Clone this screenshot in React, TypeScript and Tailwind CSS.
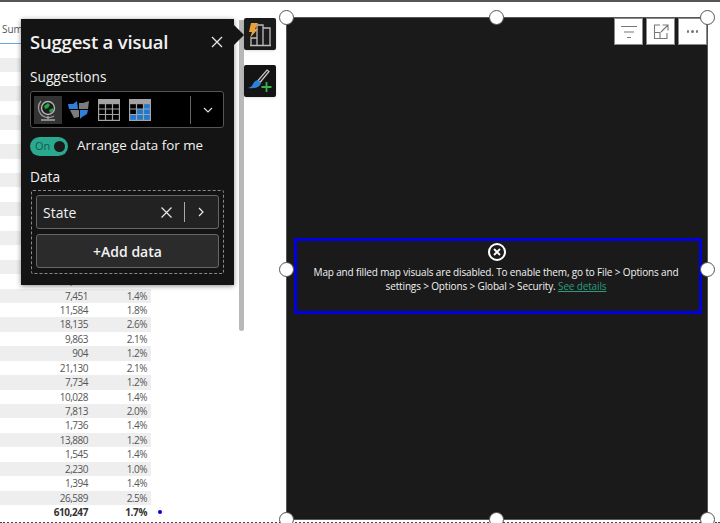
import React from 'react';

const rows = [
  ['', ''], ['', ''], ['', ''], ['', ''], ['', ''], ['', ''], ['', ''], ['', ''],
  ['', ''], ['', ''], ['', ''], ['', ''], ['', ''], ['', ''], ['', ''],
  ['8,308', '1.6%'],
  ['7,451', '1.4%'], ['11,584', '1.8%'], ['18,135', '2.6%'], ['9,863', '2.1%'],
  ['904', '1.2%'], ['21,130', '2.1%'], ['7,734', '1.2%'], ['10,028', '1.4%'],
  ['7,813', '2.0%'], ['1,736', '1.4%'], ['13,880', '1.2%'], ['1,545', '1.4%'],
  ['2,230', '1.0%'], ['1,394', '1.4%'], ['26,589', '2.5%'],
];

const Handle = ({ className }: { className: string }) => (
  <div className={`absolute w-[15px] h-[15px] rounded-full bg-white border-[1.5px] border-[#555] ${className}`} />
);

const GlobeIcon = () => (
  <svg width="22" height="24" viewBox="0 0 22 24" fill="none">
    <path d="M4 3a10 10 0 0 0 13 15" stroke="#9a9a9a" strokeWidth="1.3" />
    <circle cx="11" cy="10" r="6.5" fill="#1b1b1b" stroke="#b5b5b5" strokeWidth="1.4" />
    <path d="M7 8l4-3 2 2-2 3-3 1zM12 12l4-2 0 3-3 2z" fill="#21a34a" />
    <path d="M11 18v3M4 22h14" stroke="#a8a8a8" strokeWidth="1.3" />
  </svg>
);

const MapIcon = () => (
  <svg width="23" height="21" viewBox="0 0 23 21">
    <path d="M1 5l5 0 4-3 1 8H2z" fill="#2f80d8" />
    <path d="M12 4l4 0 6-2-1 8h-9z" fill="#7c7c7c" />
    <path d="M3 11h9v7l-5 1-2-4z" fill="#7c7c7c" />
    <path d="M13 11h8l-1 4-5 3-2 2z" fill="#2f80d8" />
  </svg>
);

const TableIcon = () => (
  <svg width="22" height="22" viewBox="0 0 22 22" fill="none" stroke="#a3a3a3" strokeWidth="1.2">
    <rect x="0.6" y="0.6" width="20.8" height="20.8" />
    <rect x="0.6" y="0.6" width="20.8" height="4" fill="#a3a3a3" />
    <path d="M0.6 10h20.8M0.6 15.5h20.8M7.5 5v16M14.5 5v16" />
  </svg>
);

const TableBlueIcon = () => (
  <svg width="22" height="22" viewBox="0 0 22 22" fill="none">
    <rect x="7.5" y="10" width="14" height="11.5" fill="#1f78d1" />
    <rect x="14.5" y="5" width="7" height="5" fill="#1f78d1" />
    <rect x="0.6" y="15.5" width="7" height="6" fill="#1f78d1" />
    <g stroke="#a3a3a3" strokeWidth="1.2">
      <rect x="0.6" y="0.6" width="20.8" height="20.8" />
      <rect x="0.6" y="0.6" width="20.8" height="4" fill="#a3a3a3" />
      <path d="M0.6 10h20.8M0.6 15.5h20.8M7.5 5v16M14.5 5v16" />
    </g>
  </svg>
);

const SuggestIcon = () => (
  <svg width="24" height="26" viewBox="0 0 24 26" fill="none">
    <path d="M3 24v-7h6v7M9 24V4h6v20M15 24V7h7v17M2 24.500h21" stroke="#bdbdbd" strokeWidth="1.3" />
    <path d="M3 2h7L7 8h3L2 17l2-6H1z" fill="#e8a33c" />
  </svg>
);

const BrushIcon = () => (
  <svg width="26" height="26" viewBox="0 0 26 26" fill="none">
    <path d="M20 2l2 1.5-9 11-2-2z" fill="#1b1b1b" stroke="#c8c8c8" strokeWidth="1.2" />
    <path d="M11 12l3 3c-1 4-5 6-13 5 3-1 4-2 5-4 1-2 3-4 5-4z" fill="#2f80d8" />
    <path d="M19.5 14v10M14.500 19h10" stroke="#37b24d" strokeWidth="1.8" />
  </svg>
);

const FilterIcon = () => (
  <svg width="16" height="14" viewBox="0 0 16 14" stroke="#777" strokeWidth="1.2">
    <path d="M0 1.500h16M3 7h10M6 12.500h4" />
  </svg>
);

const FocusIcon = () => (
  <svg width="16" height="16" viewBox="0 0 16 16" fill="none" stroke="#777" strokeWidth="1.1">
    <path d="M7 1H1.500v13.500H14V9M9.500 1H15v5.500M15 1L8 8M1.500 8.500H7V14.500" />
  </svg>
);

export default function App() {
  return (
    <div className="relative w-[720px] h-[523px] overflow-hidden bg-white font-['Open_Sans',sans-serif]">
      <div className="h-[1.5px] bg-[#555]" />

      <div className="flex h-[520px]">
        {/* table */}
        <div className="w-[151px] shrink-0">
          <div className="h-[42px] flex items-end pb-[6px] border-b border-[#6aa9e0] text-[10px] text-[#555]">
            <span className="pl-[2px]">Sum</span>
          </div>
          <div className="h-[14px]" />
          <div className="text-[10px] leading-[14.45px] text-[#555] tracking-[-0.5px]">
            {rows.map((row, i) => (
              <div key={i} className={`flex h-[14.45px] ${i % 2 === 0 ? 'bg-[#eeeeee]' : 'bg-white'}`}>
                <span className="w-[88px] text-right">{row[0]}</span>
                <span className="w-[59px] text-right">{row[1]}</span>
              </div>
            ))}
          </div>
          <div className="flex h-[14px] text-[10px] leading-[14px] font-bold text-[#333] tracking-[-0.4px]">
            <span className="w-[88px] shrink-0 text-right">610,247</span>
            <span className="w-[59px] shrink-0 text-right">1.7%</span>
            <span className="w-[4px] h-[4px] rounded-full bg-[#0000e0] ml-[11px] mt-[5px] shrink-0" />
          </div>
        </div>

        {/* scrollbar */}
        <div className="w-[5px] h-[311px] mt-[18px] ml-[88px] rounded-b-sm bg-[#b8b8b8] shrink-0" />

        {/* toolbar */}
        <div className="flex flex-col gap-[15px] pt-[16.5px] shrink-0">
          <div className="w-[32px] h-[32px] rounded-[2px] bg-[#1b1b1b] flex items-center justify-center shadow-sm">
            <SuggestIcon />
          </div>
          <div className="w-[32px] h-[32px] rounded-[2px] bg-[#141414] flex items-center justify-center shadow-sm">
            <BrushIcon />
          </div>
        </div>

        {/* map visual */}
        <div className="relative w-[422px] h-[503px] ml-[10px] mt-[15.5px] bg-[#1a1a1a] border border-[#555] flex flex-col items-stretch justify-center shrink-0">
          <div className="absolute top-0 right-0 flex gap-[3px]">
            <div className="w-[29px] h-[27px] bg-white border border-[#8a8a8a] flex items-center justify-center"><FilterIcon /></div>
            <div className="w-[29px] h-[27px] bg-white border border-[#8a8a8a] flex items-center justify-center"><FocusIcon /></div>
            <div className="w-[29px] h-[27px] bg-white border border-[#8a8a8a] flex items-center justify-center gap-[2px]">
              <span className="w-[2.5px] h-[2.5px] rounded-full bg-[#777]" />
              <span className="w-[2.5px] h-[2.5px] rounded-full bg-[#777]" />
              <span className="w-[2.5px] h-[2.5px] rounded-full bg-[#777]" />
            </div>
          </div>

          <div className="ml-[7px] mr-[5px] mt-[15px] h-[76px] border-[3px] border-[#0000e0] flex flex-col items-center pt-[1.500px] text-[10px] leading-[14px] text-[#f2f2f2] text-center">
            <div className="w-[18px] h-[18px] rounded-full border-[2px] border-white flex items-center justify-center shrink-0 mb-[4px] -ml-[2px]">
              <svg width="8" height="8" viewBox="0 0 8 8" stroke="#fff" strokeWidth="1.8"><path d="M1 1l6 6M7 1L1 7" /></svg>
            </div>
            <p className="w-[385px] tracking-[-0.15px] -ml-[4px]">
              Map and filled map visuals are disabled. To enable them, go to File &gt; Options and settings &gt; Options &gt; Global &gt; Security. <a className="text-[#2a9d7f] underline">See details</a>
            </p>
          </div>

          <Handle className="-left-[8px] -top-[8px]" />
          <Handle className="left-[202px] -top-[8px]" />
          <Handle className="-right-[8px] -top-[8px]" />
          <Handle className="-left-[8px] top-[244px]" />
          <Handle className="-right-[8px] top-[244px]" />
          <Handle className="-left-[8px] -bottom-[8px]" />
          <Handle className="left-[202px] -bottom-[8px]" />
          <Handle className="-right-[8px] -bottom-[8px]" />
        </div>
      </div>

      {/* dotted bottom edge */}
      <div className="border-t-2 border-dotted border-[#444]" />

      {/* suggest popup */}
      <div className="absolute left-[21px] top-[19px] w-[213px] h-[266px] bg-[#141414] shadow-[0_1px_5px_rgba(0,0,0,0.45)] px-[9px] pt-[9px] text-[#f2f2f2]">
        <div className="absolute -right-[10px] top-[6px] w-0 h-0 border-y-[10px] border-y-transparent border-l-[10px] border-l-[#141414]" />
        <div className="flex items-center justify-between h-[28px]">
          <span className="text-[18.5px] font-semibold tracking-[-0.2px]">Suggest a visual</span>
          <svg width="12" height="12" viewBox="0 0 12 12" stroke="#e8e8e8" strokeWidth="1.3" className="mr-[2px] -mt-[1px]"><path d="M1 1l10 10M11 1L1 11" /></svg>
        </div>

        <div className="text-[13.7px] leading-[20px] mt-[11px]">Suggestions</div>
        <div className="flex items-center w-[194px] h-[37px] mt-[4px] bg-black border border-[#555] rounded-[3px] pl-[3px]">
          <div className="w-[28px] h-[28px] bg-[#333] flex items-center justify-center"><GlobeIcon /></div>
          <div className="w-[30px] flex justify-center ml-[1px]"><MapIcon /></div>
          <div className="w-[30px] flex justify-center ml-[1px]"><TableIcon /></div>
          <div className="w-[30px] flex justify-center ml-[1px]"><TableBlueIcon /></div>
          <div className="w-px h-[28px] bg-[#666] ml-[35px]" />
          <svg width="10" height="6" viewBox="0 0 10 6" fill="none" stroke="#ddd" strokeWidth="1.2" className="ml-[12px]"><path d="M1 1l4 4 4-4" /></svg>
        </div>

        <div className="flex items-center mt-[9px] h-[19px]">
          <div className="flex items-center justify-between w-[38px] h-[19px] rounded-full bg-[#2ba98e] pl-[5px] pr-[3px]">
            <span className="text-[11px] text-[#0f5e4e]">On</span>
            <span className="w-[11px] h-[11px] rounded-full bg-[#1a1a1a]" />
          </div>
          <span className="ml-[9px] text-[13.4px] -mt-[2px]">Arrange data for me</span>
        </div>

        <div className="text-[13.7px] leading-[20px] mt-[11px]">Data</div>
        <div className="w-[193px] h-[84px] ml-px mt-[3px] border border-dashed border-[#888] rounded-[2px] p-[4px] flex flex-col gap-[5px]">
          <div className="flex items-center h-[34px] bg-[#222] border border-[#666] rounded-[3px] pl-[6px] text-[14px]">
            <span className="flex-1">State</span>
            <svg width="11" height="11" viewBox="0 0 11 11" stroke="#e8e8e8" strokeWidth="1.2"><path d="M0.500 0.500l10 10M10.500 0.500l-10 10" /></svg>
            <div className="w-px h-[20px] bg-[#aaa] ml-[12px]" />
            <svg width="6" height="10" viewBox="0 0 6 10" fill="none" stroke="#e8e8e8" strokeWidth="1.2" className="ml-[13px] mr-[14px]"><path d="M1 1l4 4-4 4" /></svg>
          </div>
          <div className="flex items-center justify-center h-[34px] bg-[#2b2b2b] border border-[#666] rounded-[3px] text-[14px] font-semibold">+Add data</div>
        </div>
      </div>
    </div>
  );
}
